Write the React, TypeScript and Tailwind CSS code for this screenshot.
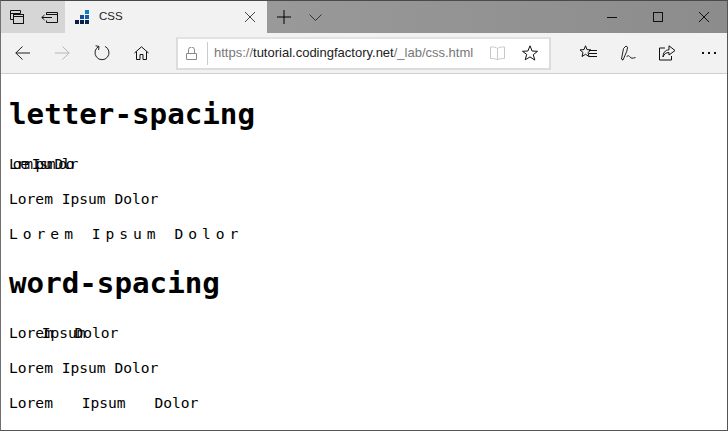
const S = "none";

function Svg({ w, h, children, className = "" }: { w: number; h: number; children: React.ReactNode; className?: string }) {
  return (
    <svg width={w} height={h} viewBox={`0 0 ${w} ${h}`} fill={S} stroke="currentColor" strokeWidth={1} className={`shrink-0 ${className}`}>
      {children}
    </svg>
  );
}

function Tabs1() {
  return (
    <Svg w={15} h={14} className="text-[#111]">
      <path d="M3.5 9.5H.5V.5h10v3M.5 3.5h10" />
      <rect x="3.5" y="4.5" width="10" height="9" fill="#d6d6d6" />
      <path d="M3.5 6.5h10" />
    </Svg>
  );
}
function Tabs2() {
  return (
    <Svg w={17} h={11} className="text-[#111]">
      <path d="M5.5 3V.5h11v10h-11V8.5" />
      <path d="M5.5 2.5h11" />
      <path d="M11 5.5H.8M3.5 3 .8 5.5 3.5 8" />
    </Svg>
  );
}
function Logo() {
  return (
    <svg width={15} height={15} viewBox="0 0 15 15" className="shrink-0">
      <rect x="10" y="0" width="4" height="4" fill="#0f7cc4" />
      <rect x="5" y="5" width="4" height="4" fill="#0f4f96" />
      <rect x="10" y="5" width="4" height="4" fill="#0f5ea8" />
      <rect x="0" y="10" width="4" height="4" fill="#0b1c47" />
      <rect x="5" y="10" width="4" height="4" fill="#0b1c47" />
      <rect x="10" y="10" width="4" height="4" fill="#0b2456" />
    </svg>
  );
}

export default function App() {
  const mono = "font-['DejaVu_Sans_Mono','Liberation_Mono',monospace]";
  const p = `${mono} my-4 text-[14.6px] leading-[18.75px] text-black whitespace-pre`;
  const h = `${mono} my-[21.44px] text-[29.2px] leading-[37.5px] font-bold text-black`;
  return (
    <div className="w-[728px] h-[431px] flex flex-col overflow-hidden bg-white border-t border-l border-r border-b border-t-[#4a4a4a] border-l-[#707070] border-r-[#555] border-b-[#555] font-['Liberation_Sans',sans-serif]">
      <div className="h-[32px] flex shrink-0 items-stretch bg-gradient-to-r from-[#a2a2a2] via-[#969696] to-[#8c8c8c]">
        <div className="w-[64px] flex items-center bg-[#d6d6d6] pl-[9px] gap-[16px]">
          <Tabs1 />
          <Tabs2 />
        </div>
        <div className="w-[202px] bg-[#f2f2f2] flex items-center pl-[10px] pr-[12px]">
          <Logo />
          <span className="ml-[9px] text-[11.5px] text-[#222] flex-1">CSS</span>
          <Svg w={10} h={10} className="text-[#444]">
            <path d="M0 0l10 10M10 0 0 10" />
          </Svg>
        </div>
        <div className="w-[50px] flex items-center pl-[10px] gap-[18px]">
          <Svg w={14} h={14} className="text-black">
            <path d="M7 0v14M0 7h14" />
          </Svg>
          <Svg w={13} h={7} className="text-[#333]">
            <path d="M.5.5 6.5 6.5 12.5.5" />
          </Svg>
        </div>
        <div className="flex-1" />
        <div className="flex items-center pr-[18px] text-[#111]">
          <Svg w={10} h={1}>
            <path d="M0 .5h10" />
          </Svg>
          <Svg w={10} h={10} className="ml-[36px]">
            <rect x=".5" y=".5" width="9" height="9" />
          </Svg>
          <Svg w={10} h={10} className="ml-[36px]">
            <path d="M0 0l10 10M10 0 0 10" />
          </Svg>
        </div>
      </div>

      <div className="h-[41px] shrink-0 flex items-center bg-[#f2f2f2] border-b border-[#cfcfcf] pl-[14px]">
        <Svg w={15} h={14} className="text-[#222]">
          <path d="M15 7H.8M7.5.5.8 7l6.7 6.5" />
        </Svg>
        <Svg w={15} h={14} className="ml-[25px] text-[#b5b5b5]">
          <path d="M0 7h14.2M7.5.5 14.2 7l-6.7 6.5" />
        </Svg>
        <Svg w={16} h={16} className="ml-[24px] text-[#222]">
          <path d="M5 1.4A7 7 0 1 0 11 1.4" />
          <path d="M1.6 .8 5 1.4 4.6 5" />
        </Svg>
        <Svg w={15} h={14} className="ml-[24px] text-[#111]">
          <path d="M.5 7 7.5.8 14.5 7M2.5 5.5v8h3.5V8.5h3v5h3.5v-8" />
        </Svg>
        <div className="ml-[27px] w-[375px] h-[33px] flex items-center bg-white border-2 border-[#dcdcdc] border-t-[#e2e2e2]">
          <Svg w={11} h={13} className="ml-[8px] text-[#8a8a8a]">
            <path d="M.5 6.5h10v6H.5zM2.5 6.5V3a3 3 0 0 1 6 0v3.5" />
          </Svg>
          <div className="ml-[10px] w-px h-[23px] bg-[#cccccc]" />
          <span className="ml-[6px] text-[13px] text-[#777] whitespace-pre flex-1">
            https://<span className="text-[#222]">tutorial.codingfactory.net</span>/_lab/css.html
          </span>
          <Svg w={15} h={14} className="text-[#c8c8c8]">
            <path d="M7.5 2.5C6 1.2 3.5.8.5 1v11.5c3 0 5.5.2 7 1.5 1.5-1.3 4-1.5 7-1.5V1c-3-.2-5.5.2-7 1.5zM7.5 2.5V14" />
          </Svg>
          <Svg w={16} h={16} className="ml-[17px] mr-[11px] text-[#111]">
            <path d="M8 .8l2.1 5.2 5.4.3-4.2 3.4 1.5 5.4L8 11.9l-4.8 2.9 1.5-5.4L.5 6.3l5.4-.3z" />
          </Svg>
        </div>
        <Svg w={17} h={16} className="ml-[29px] text-[#111]">
          <path d="M5.5.8 7 4.6l4 .3-3 2.6 1 4-3.5-2.2L2 11.5l1-4-3-2.6 4-.3z" />
          <path d="M9 5.5h8M9 8.5h8M9 11.5h8" />
        </Svg>
        <Svg w={16} h={17} className="ml-[23px] text-[#222]">
          <path d="M1.5 14 3.5 3.5 6 1l1.6 1.2-.8 4L3 15zM1.5 14l1.5 1M6.5 12c1.5-2 2.5-1.5 3.5 0s2.5 1.5 5.5.5" />
        </Svg>
        <Svg w={17} h={16} className="ml-[23px] text-[#111]">
          <path d="M6 3H.5v12h12v-4" />
          <path d="M10 .8 16 5.5 10 10V7.5C7 7.5 5 9 4 12c0-4 2-7 6-7.2z" />
        </Svg>
        <div className="ml-[26px] flex gap-[4px]">
          <span className="w-[2px] h-[2px] bg-[#111]" />
          <span className="w-[2px] h-[2px] bg-[#111]" />
          <span className="w-[2px] h-[2px] bg-[#111]" />
        </div>
      </div>

      <main className="flex-1 px-2 pt-px overflow-hidden">
        <h1 className={h}>letter-spacing</h1>
        <p className={`${p} tracking-[-5px]`}>Lorem Ipsum Dolor</p>
        <p className={p}>Lorem Ipsum Dolor</p>
        <p className={`${p} tracking-[5px]`}>Lorem Ipsum Dolor</p>
        <h1 className={h}>word-spacing</h1>
        <p className={`${p} [word-spacing:-20px]`}>Lorem Ipsum Dolor</p>
        <p className={p}>Lorem Ipsum Dolor</p>
        <p className={`${p} [word-spacing:20px]`}>Lorem Ipsum Dolor</p>
      </main>
    </div>
  );
}
